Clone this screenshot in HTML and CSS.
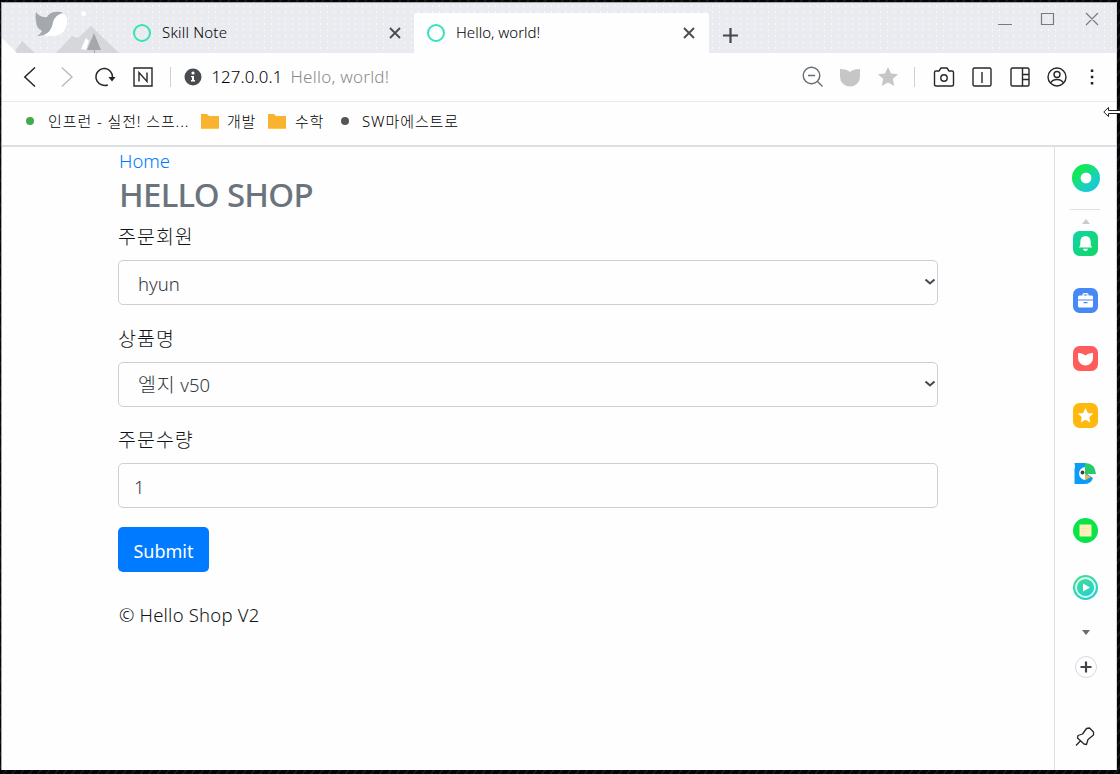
FILE: index.html
```html
<!DOCTYPE html>
<html lang="ko">
<head>
<meta charset="utf-8">
<title>Hello, world!</title>
<link rel="stylesheet" href="styles.css">
</head>
<body>
<div class="window">
  <header class="tabstrip">
    <svg class="art" width="120" height="50" viewBox="2 3 120 50">
      <path d="M2 38 17 53H2z" fill="#fff"/>
      <path d="M15 51 22 41 35 53H17z" fill="#d4d6d9"/>
      <path d="M56 53 72 36l6 2L91 26l28 27z" fill="#d6d7da"/>
      <path d="M81 49 86 38l3 3-3 9z" fill="#fff"/>
      <path d="m94 33 7 17h-6v3h-1v-3h-7z" fill="#a4a8ad"/>
      <path d="M61 13q7 1 6 10-2 13-15 13-7 0-11-1 9-5 10-11 3-10 10-11" fill="#fff"/>
      <path d="M36 12q4 6 11 5 2-4 7-5 6-1 9 1-8 2-10 9-2 14-16 14 3-1 5-5-6-3-6-10-1-3 0-9" fill="#a5a9af"/>
      <circle cx="83.500" cy="13.500" r="2.500" fill="#fff"/>
    </svg>
    <div class="tab first">
      <span class="favicon"></span><span class="tab-title">Skill Note</span>
      <svg class="close" width="12" height="12" viewBox="0 0 12 12"><path d="m1 1 10 10M11 1 1 11"/></svg>
    </div>
    <div class="tab active">
      <span class="favicon"></span><span class="tab-title">Hello, world!</span>
      <svg class="close" width="12" height="12" viewBox="0 0 12 12"><path d="m1 1 10 10M11 1 1 11"/></svg>
    </div>
    <svg class="newtab" width="15" height="15" viewBox="0 0 15 15"><path d="M7.500 0v15M0 7.500h15"/></svg>
    <svg class="controls" width="102" height="16" viewBox="0 0 102 16"><path d="M1 13.500h14M44.500 2.500h12v11h-12zM89 2l12 12M101 2 89 14"/></svg>
  </header>

  <nav class="toolbar">
    <span class="cell"><svg width="20" height="20" viewBox="0 0 20 20"><path d="M15 .5 4.800 10 15 19.500" stroke-width="1.500"/></svg></span>
    <span class="cell dim"><svg width="20" height="20" viewBox="0 0 20 20"><path d="M4.800.5 15 10 4.800 19.500"/></svg></span>
    <span class="cell"><svg width="22" height="22" viewBox="0 0 22 22"><path d="M7.500 18.700A8.300 8.300 0 1 1 18.500 11M7.500 18.700q3 1.500 6.300.3" stroke-width="1.500"/><path d="M14.500 11h7L18 15.500z" fill="#222" stroke="none"/></svg></span>
    <span class="cell"><svg width="20" height="20" viewBox="0 0 20 20"><path d="M1 1h18v18H1zM6 14.500v-9l8 9v-9" stroke-width="1.400"/></svg></span>
    <span class="sep left"></span>
    <svg class="info" width="18" height="18" viewBox="0 0 18 18"><circle cx="9" cy="9" r="8.500" fill="#484c51"/><circle cx="9" cy="5" r="1.600" fill="#fff"/><path d="M7 8h3v4h1v1.500H7V12h1V9.300H7z" fill="#fff"/></svg>
    <span class="host">127.0.0.1</span><span class="page-title">Hello, world!</span>
    <span class="spacer"></span>
    <span class="cell gray"><svg width="22" height="22" viewBox="0 0 22 22"><circle cx="9.500" cy="9.500" r="8.300"/><path d="M6 9.500h7M15.500 15.500l5 5"/></svg></span>
    <span class="cell pale low"><svg width="22" height="20" viewBox="0 0 22 20"><path d="M1 1q7 0 10 3 3-3 10-3v8a10 9.500 0 0 1-20 0z"/></svg></span>
    <span class="cell pale"><svg width="22" height="22" viewBox="0 0 22 22"><path d="m11 1 3 6.500 7 .8-5.200 4.800L17.300 20 11 16.500 4.700 20l1.500-6.900L1 8.300l7-.8z"/></svg></span>
    <span class="sep right"></span>
    <span class="cell"><svg width="22" height="22" viewBox="0 0 22 22"><path d="M3 5h3l2-3h6l2 3h3q1.500 0 1.500 1.500v12q0 1.500-1.500 1.500H3q-1.500 0-1.500-1.500v-12Q1.500 5 3 5z"/><circle cx="11" cy="12" r="3.200"/></svg></span>
    <span class="cell"><svg width="22" height="22" viewBox="0 0 22 22"><rect x="2" y="2" width="18" height="18" rx="1.500"/><path d="M11 6v11"/></svg></span>
    <span class="cell"><svg width="22" height="22" viewBox="0 0 22 22"><rect x="2" y="2" width="18" height="18" rx="1.500"/><path d="M13.500 2v18M13.500 8.500H20M13.500 13.500H20"/></svg></span>
    <span class="cell"><svg width="22" height="22" viewBox="0 0 22 22"><circle cx="11" cy="11" r="9"/><circle cx="11" cy="8.500" r="3"/><path d="M4.500 17q2-3.500 6.500-3.500t6.500 3.500"/></svg></span>
    <svg class="dots" width="4" height="16" viewBox="0 0 4 16"><path d="M.8.500h2.500V3H.8zM.8 6.800h2.500v2.500H.8zM.8 13h2.500v2.500H.8z"/></svg>
  </nav>

  <nav class="bookmarks">
    <i class="dot green"></i><span class="bm b1">인프런 - 실전! 스프...</span>
    <svg class="folder f1" width="18" height="15" viewBox="0 0 18 15"><path d="M0 0h6l2 2h10v13H0z" fill="#f9b32f"/><path d="M0 14h18v1H0z" fill="#ffc845"/></svg><span class="bm b2">개발</span>
    <svg class="folder f2" width="18" height="15" viewBox="0 0 18 15"><path d="M0 0h6l2 2h10v13H0z" fill="#f9b32f"/><path d="M0 14h18v1H0z" fill="#ffc845"/></svg><span class="bm b3">수학</span>
    <i class="dot dark"></i><span class="bm b4">SW마에스트로</span>
  </nav>

  <div class="viewport">
    <main class="page">
      <a class="home">Home</a>
      <h1 class="brand">HELLO SHOP</h1>
      <form>
        <div class="group"><label class="label">주문회원</label>
          <div class="field select"><span>hyun</span><svg class="chev" width="12" height="8" viewBox="0 0 12 8"><path d="m1.500 1.500 4.500 4 4.500-4"/></svg></div></div>
        <div class="group"><label class="label">상품명</label>
          <div class="field select"><span><span class="hangul">엘지</span> v50</span><svg class="chev" width="12" height="8" viewBox="0 0 12 8"><path d="m1.500 1.500 4.500 4 4.500-4"/></svg></div></div>
        <div class="group"><label class="label">주문수량</label>
          <div class="field number"><span>1</span></div></div>
        <button class="submit" type="button">Submit</button>
      </form>
      <footer class="footer">© Hello Shop V2</footer>
    </main>
    <aside class="sidebar">
      <div class="ring"></div>
      <div class="side-line"></div>
      <svg class="up" width="8" height="5" viewBox="0 0 8 5"><path d="m4 0 4 5H0z" fill="#c9cbce"/></svg>
      <div class="apps">
        <svg width="25" height="25" viewBox="0 0 25 25"><defs><linearGradient id="bell" x2="1" y2="1"><stop stop-color="#10d4a6"/><stop offset="1" stop-color="#13d763"/></linearGradient></defs><rect width="25" height="25" rx="6.500" fill="url(#bell)"/><path d="M12.500 5q5 0 5.200 6v3l1.300 2.500H6L7.300 14v-3q.2-6 5.200-6M10 17.700h5q-.5 2.300-2.500 2.300T10 17.700" fill="#fff"/></svg>
        <svg width="25" height="25" viewBox="0 0 25 25"><rect width="25" height="25" rx="6.500" fill="#4788f7"/><path d="M5 9q0-1.500 1.500-1.500h2.800Q9.300 5 11 5h3q1.700 0 1.700 2.500h2.800Q20 7.500 20 9v2.500H5zM5 12.500h15v5.500q0 1.500-1.500 1.500h-12Q5 19.500 5 18z" fill="#fff"/><path d="M10.700 7.500h3.600V6.500h-3.600zM10.500 14h4v1.300h-4z" fill="#4788f7"/></svg>
        <svg width="25" height="25" viewBox="0 0 25 25"><rect width="25" height="25" rx="6.500" fill="#ff5d5d"/><path d="M5 7q5 0 7.500 2.500Q15 7 20 7v5a7.500 7.500 0 0 1-15 0z" fill="#fff"/></svg>
        <svg width="25" height="25" viewBox="0 0 25 25"><rect width="25" height="25" rx="6.500" fill="#ffb90e"/><path d="m12.500 5 2.300 4.900 5.400.6-4 3.700 1.100 5.300-4.800-2.700-4.800 2.700 1.100-5.300-4-3.700 5.400-.6z" fill="#fff"/></svg>
        <svg width="25" height="25" viewBox="0 0 25 25"><path d="M1.500 2h11v10l7.500 5q-2 6-9 6H1.500V8q1-2 0-6" fill="#0b9cfa"/><path d="M12.500 6v13A6.500 6.500 0 0 1 12.500 6" fill="#fff"/><circle cx="9.500" cy="11.500" r="1.900" fill="#4c3b41"/><path d="M12 2q10 0 11 11H12z" fill="#27cb69"/><path d="M12.500 13.500 18 16l-5.500 3z" fill="#ffb819"/></svg>
        <svg width="25" height="25" viewBox="0 0 25 25"><circle cx="12.500" cy="12.500" r="12.500" fill="#09e449"/><path d="M6.500 6.500h12v12h-12z" fill="#fbf1b7"/><path d="M7.500 10.500h10M10.500 7.500v10" stroke="#f1dfa4" stroke-dasharray="1 1"/></svg>
        <svg width="25" height="25" viewBox="0 0 25 25"><defs><linearGradient id="play" x2=".5" y2="1"><stop stop-color="#48df8d"/><stop offset="1" stop-color="#27cfd1"/></linearGradient></defs><circle cx="12.500" cy="12.500" r="12.500" fill="url(#play)"/><circle cx="12.500" cy="12.500" r="9.500" fill="none" stroke="#d9fff5" stroke-width="1.800"/><path d="m10 8.500 7 4-7 4z" fill="#fff"/></svg>
      </div>
      <svg class="down" width="8" height="5" viewBox="0 0 8 5"><path d="m4 5 4-5H0z" fill="#686c71"/></svg>
      <svg class="add" width="22" height="22" viewBox="0 0 22 22"><circle cx="11" cy="11" r="10.500" fill="none" stroke="#d8d9df"/><path d="M11 5.500v11M5.500 11h11" stroke="#3f444b" stroke-width="2.200"/></svg>
      <svg class="pin" width="20" height="20" viewBox="0 0 20 20"><path d="m11.500 1.500 3-.5 4 4v3L13 12.500l-1.500 5-2.500-.5-6.500-6L3 8.500 7.500 7zM5.500 13.800 1 18.500" fill="none" stroke="#25272a" stroke-width="1.300" stroke-linejoin="round"/></svg>
    </aside>
  </div>
</div>
<svg class="cursor" width="17" height="12" viewBox="0 0 17 12"><path d="M.8 6 5.500 1.500v3H18v3H5.500v3z" fill="#fff" stroke="#222"/></svg>
</body>
</html>
```

FILE: styles.css
```css
* { box-sizing: border-box; }
body {
  margin: 0;
  width: 1120px;
  height: 774px;
  padding: 2px 3px 4px 1px;
  overflow: hidden;
  background: repeating-linear-gradient(125deg, #050407 0 5px, #17161a 5px 7px);
  font-family: "Noto Sans", "Noto Sans CJK KR", sans-serif;
  font-weight: 300;
  color: #000;
}
svg { display: block; flex: none; }
.window {
  height: 768px;
  display: flex;
  flex-direction: column;
  border: 1px solid #a8a9ad;
  border-bottom: 0;
  border-right-color: #d6d7da;
  background: #fefefe;
}
.tabstrip {
  display: flex;
  height: 50px;
  flex: none;
  background-color: #eaebf1;
  background-image: radial-gradient(circle, #fafaef 0 .6px, transparent .8px);
  background-size: 7px 6px;
}
.tab { display: flex; align-items: center; height: 40px; margin-top: 10px; width: 292px; padding: 0 13px 0 11px; }
.tab.active { width: 295px; padding: 0 14px 0 13px; background: #fefefe; border-radius: 2px 2px 0 0; }
.favicon { width: 18px; height: 18px; border: 2.500px solid #36e2bb; border-radius: 50%; margin-right: 11px; flex: none; }
.tab-title { font-size: 15px; white-space: nowrap; line-height: 20px; margin-top: -2px; }
.first .tab-title { letter-spacing: .2px; }
.close { margin-left: auto; fill: none; stroke: #4a4c50; stroke-width: 1.900; }
.newtab { margin: 25px 0 0 14px; stroke: #44484b; stroke-width: 2.200; }
.controls { margin: 8px 17px 0 auto; fill: none; stroke: #777b80; stroke-width: 1.200; }

.toolbar { display: flex; align-items: center; height: 49px; flex: none; padding: 0 22px 0 9px; border-bottom: 1px solid #e9eaec; }
.cell { width: 37.600px; display: flex; justify-content: center; flex: none; }
.cell svg { fill: none; stroke: #25272a; stroke-width: 1.400; }
.dim svg { stroke: #b9bbc0; }
.gray svg { stroke: #676c71; }
.pale svg { fill: #c5c7c7; stroke: none; }
.low { padding-top: 2px; }
.sep { width: 1px; height: 20px; background: #cfd0d3; flex: none; }
.sep.left { margin: 0 13px 0 9px; }
.sep.right { margin: 0 11px 0 7px; }
.host { margin-left: 9px; font-size: 16.800px; letter-spacing: .15px; white-space: nowrap; margin-top: -2px; }
.page-title { margin-left: 8px; font-size: 17px; letter-spacing: .25px; color: #8a8a8a; white-space: nowrap; margin-top: -2px; }
.spacer { flex: 1; }
.dots { fill: #222; margin-left: 14px; }

.bookmarks { display: flex; align-items: center; height: 45px; flex: none; padding: 0 0 6px 24px; border-bottom: 2px solid #dedfe2; font-size: 15px; }
.dot { width: 8px; height: 8px; border-radius: 50%; flex: none; }
.green { background: #42ac4c; }
.dark { background: #555; }
.bm { flex: none; white-space: nowrap; line-height: 20px; letter-spacing: .8px; }
.b1 { width: 153px; padding-left: 14px; letter-spacing: .9px; }
.folder { margin-top: 2px; margin-right: 8px; }
.f1 { margin-left: 14px; }
.b2 { width: 33px; }
.f2 { margin-left: 8px; }
.b3 { width: 47px; padding-left: 1px; }
.b4 { margin-left: 13px; letter-spacing: .9px; }

.viewport { display: flex; flex: 1; min-height: 0; }
.page { flex: 1; padding: 0 116px; font-size: 18.500px; line-height: 28px; display: flex; flex-direction: column; align-items: flex-start; color: #111417; }
.home { color: #007bff; padding-left: 1px; }
.brand { margin: 0 0 8px; padding-left: 1px; font-size: 33px; letter-spacing: -.7px; line-height: 40px; font-weight: 500; color: #6b747d; white-space: nowrap; }
.label { display: block; height: 28px; line-height: 26px; margin-bottom: 9px; font-family: "Noto Sans CJK KR", sans-serif; font-size: 19.500px; letter-spacing: 1px; }
.hangul { font-size: 19.500px; letter-spacing: .8px; }
.field { width: 820px; height: 45px; display: flex; align-items: center; justify-content: space-between; border: 1px solid #cbd0d7; border-radius: 5px; padding: 2px 1px 0 19px; color: #33383d; }
.group { margin-bottom: 19.500px; }
.group:last-of-type { margin-bottom: 18.500px; }
.number { padding-left: 15px; }
.chev { fill: none; stroke: #444951; stroke-width: 2; margin-bottom: 3px; }
.submit { display: block; width: 91px; height: 45px; padding: 3px 0 0; border: 0; border-radius: 5px; background: #007bff; color: #fff; font: 400 18px/28px "Noto Sans", sans-serif; }
.footer { margin-top: 29px; padding-left: 1px; letter-spacing: .2px; }

.sidebar { width: 63px; flex: none; display: flex; flex-direction: column; align-items: center; border-left: 1px solid #dde1e3; }
.ring { width: 28px; height: 28px; margin-top: 17px; border-radius: 50%; background: radial-gradient(circle, #fff 0 5px, transparent 5.800px), linear-gradient(140deg, #12e65b 0 30%, #18d6aa 55%, #1bbef6); }
.side-line { width: 30px; height: 1px; margin: 17px 2px 0 0; background: #e0e1e3; }
.up { margin-top: 9px; }
.apps { display: grid; gap: 32.400px; margin: 7px 1px 0 0; }
.down { margin-top: 30px; }
.add { margin: 21px 1px 0 0; }
.pin { margin: 49px 2px 0 0; }
.cursor { position: absolute; left: 1103px; top: 106px; }
```
